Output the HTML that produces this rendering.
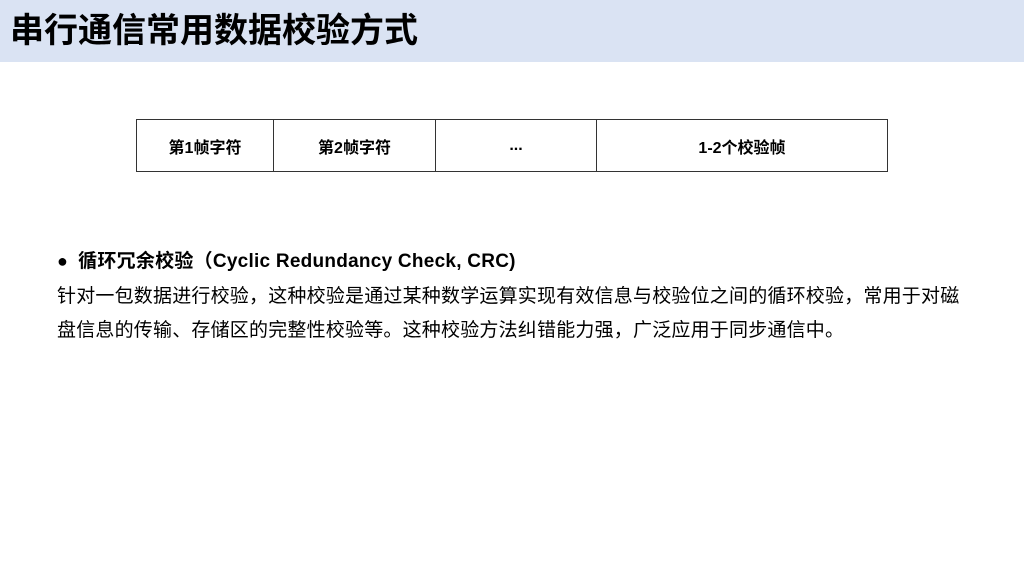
<!DOCTYPE html>
<html><head><meta charset="utf-8"><style>
body{margin:0;width:1024px;height:576px;background:#fff;position:relative;overflow:hidden;font-family:"Liberation Sans","Noto Sans CJK SC",sans-serif;color:#000}
.hdr{position:absolute;left:0;top:0;width:1024px;height:62px;background:#dae3f3}
.title{position:absolute;left:10px;top:9px;font-size:34px;font-weight:bold;line-height:44px;white-space:nowrap;letter-spacing:0px}
table{position:absolute;left:136px;top:119px;border-collapse:collapse}
td{border:1px solid #333;height:51px;padding:0;text-align:center;font-size:16px;font-weight:bold}
.b{position:absolute;left:57px;white-space:nowrap;font-size:19px;line-height:26px}
</style></head><body>
<div class="hdr"></div>
<div class="title">串行通信常用数据校验方式</div>
<table><tr><td style="width:136px">第1帧字符</td><td style="width:161px">第2帧字符</td><td style="width:160px">...</td><td style="width:290px">1-2个校验帧</td></tr></table>
<div class="b" style="top:248px;font-weight:bold;letter-spacing:0.25px"><span style="font-size:18px;margin-right:10px">●</span>循环冗余校验（Cyclic Redundancy Check, CRC)</div>
<div class="b" style="top:284px;letter-spacing:0.2px">针对一包数据进行校验，这种校验是通过某种数学运算实现有效信息与校验位之间的循环校验，常用于对磁</div>
<div class="b" style="top:318px;letter-spacing:0.2px">盘信息的传输、存储区的完整性校验等。这种校验方法纠错能力强，广泛应用于同步通信中。</div>
</body></html>
